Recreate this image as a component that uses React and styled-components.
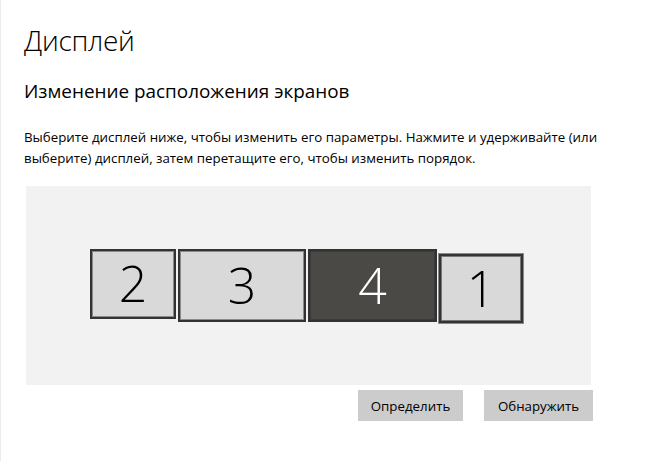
import React from "react";
import styled, { createGlobalStyle } from "styled-components";

const Global = createGlobalStyle`
  html, body { margin: 0; padding: 0; background: #fff; }
  body { font-family: "Open Sans", "Noto Sans", sans-serif; color: #000; }
`;

const Page = styled.div`
  width: 665px;
  height: 461px;
  box-sizing: border-box;
  border-left: 1px solid #ececec;
  padding: 21px 0 0 23px;
  overflow: hidden;
`;

const Title = styled.h1`
  margin: 0;
  font-size: 28px;
  font-weight: 300;
  line-height: 38px;
  letter-spacing: -0.3px;
`;

const Heading = styled.h2`
  margin: 18px 0 0 0;
  font-size: 18.9px;
  font-weight: 400;
  line-height: 28px;
`;

const Description = styled.p`
  margin: 22px 0 0 0;
  font-size: 13.3px;
  line-height: 21px;
  width: 620px;
`;

const Canvas = styled.div`
  margin: 17px 0 0 2px;
  width: 565px;
  height: 199px;
  background: #f2f2f2;
  box-sizing: border-box;
  padding: 63px 0 0 64px;
  display: flex;
  align-items: flex-start;
  gap: 2px;
`;

const Monitor = styled.div`
  box-sizing: border-box;
  width: ${(p) => p.$w}px;
  height: ${(p) => p.$h}px;
  margin-top: ${(p) => p.$top || 0}px;
  background: ${(p) => (p.$active ? "#4b4946" : "#d9d9d9")};
  color: ${(p) => (p.$active ? "#fff" : "#000")};
  border: 2px solid #333;
  box-shadow: ${(p) =>
    p.$primary
      ? "0 0 0 1px #8a8a8a, inset 0 0 0 1px #777"
      : p.$active
      ? "inset 0 0 0 1px #3a3a3a"
      : "inset 0 0 0 1px #8a8a8a"};
  display: flex;
  align-items: center;
  justify-content: center;
  font-size: 50px;
  font-weight: 300;
  line-height: 1;
  padding-bottom: 2px;
  user-select: none;
`;

const Buttons = styled.div`
  display: flex;
  gap: 21px;
  margin: 5px 0 0 334px;
`;

const Button = styled.button`
  height: 31px;
  width: ${(p) => p.$w}px;
  border: none;
  background: #cccccc;
  font-family: "Open Sans", "Noto Sans", sans-serif;
  font-size: 13.3px;
  color: #000;
  padding: 0;
  cursor: pointer;
`;

export default function App() {
  return (
    <>
      <Global />
      <Page>
        <Title>Дисплей</Title>
        <Heading>Изменение расположения экранов</Heading>
        <Description>
          Выберите дисплей ниже, чтобы изменить его параметры. Нажмите и удерживайте (или
          выберите) дисплей, затем перетащите его, чтобы изменить порядок.
        </Description>
        <Canvas>
          <Monitor $w={86} $h={70}>2</Monitor>
          <Monitor $w={128} $h={73}>3</Monitor>
          <Monitor $w={129} $h={73} $active>4</Monitor>
          <Monitor $w={84} $h={69} $top={5} $primary>1</Monitor>
        </Canvas>
        <Buttons>
          <Button $w={105}>Определить</Button>
          <Button $w={109}>Обнаружить</Button>
        </Buttons>
      </Page>
    </>
  );
}
